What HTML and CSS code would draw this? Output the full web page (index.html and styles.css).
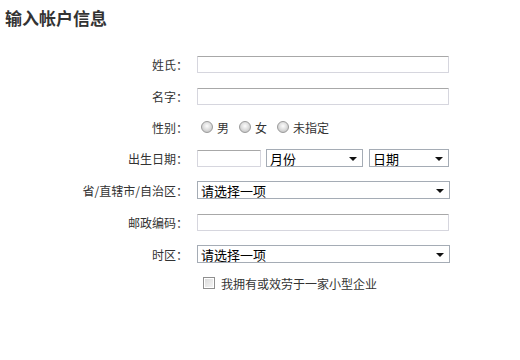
FILE: index.html
```html
<!DOCTYPE html>
<html lang="zh-CN">
<head>
    <meta charset="UTF-8">
    <title>输入帐户信息</title>
    <link rel="stylesheet" href="styles.css">
</head>
<body>
    <h1 class="title">输入帐户信息</h1>
    <form class="account-form">
        <div class="row">
            <label class="label">姓氏：</label>
            <input class="text-input" type="text">
        </div>
        <div class="row">
            <label class="label">名字：</label>
            <input class="text-input" type="text">
        </div>
        <div class="row row-radio">
            <label class="label">性别：</label>
            <div class="choices">
                <label class="choice"><input type="radio" name="sex"><span>男</span></label>
                <label class="choice"><input type="radio" name="sex"><span>女</span></label>
                <label class="choice"><input type="radio" name="sex"><span>未指定</span></label>
            </div>
        </div>
        <div class="row">
            <label class="label">出生日期：</label>
            <div class="date-fields">
                <input class="text-input year" type="text">
                <div class="select month"><span>月份</span><i class="arrow"></i></div>
                <div class="select day"><span>日期</span><i class="arrow"></i></div>
            </div>
        </div>
        <div class="row">
            <label class="label">省/直辖市/自治区：</label>
            <div class="select wide"><span>请选择一项</span><i class="arrow"></i></div>
        </div>
        <div class="row">
            <label class="label">邮政编码：</label>
            <input class="text-input" type="text">
        </div>
        <div class="row">
            <label class="label">时区：</label>
            <div class="select wide"><span>请选择一项</span><i class="arrow"></i></div>
        </div>
        <div class="row row-check">
            <span class="label"></span>
            <label class="check"><input type="checkbox"><span>我拥有或效劳于一家小型企业</span></label>
        </div>
    </form>
</body>
</html>
```

FILE: styles.css
```css
body {
    margin: 0;
    background: #fff;
    color: #333;
    font-family: "Noto Sans CJK SC", "Noto Sans", sans-serif;
    font-size: 12px;
}

.title {
    margin: 0;
    padding: 7px 0 0 5px;
    height: 48px;
    box-sizing: border-box;
    font-size: 17px;
    line-height: 22px;
    font-weight: bold;
    color: #333;
}

.account-form {
    display: flex;
    flex-direction: column;
}

.row {
    display: flex;
    align-items: center;
    height: 32px;
}

.row-radio {
    height: 30px;
}

.row-check {
    height: 26px;
}

.label {
    width: 197px;
    padding-right: 9px;
    box-sizing: border-box;
    text-align: right;
    flex-shrink: 0;
    color: #333;
}

.text-input {
    width: 252px;
    height: 17px;
    margin: 0;
    padding: 0 2px;
    box-sizing: border-box;
    border: 1px solid #d6d6de;
    border-top-color: #a8a8a8;
    border-radius: 1px;
    background: #fff;
    outline: none;
}

.text-input.year {
    width: 64px;
}

.date-fields {
    display: flex;
    gap: 5px;
    align-items: center;
}

.select {
    display: flex;
    align-items: center;
    justify-content: space-between;
    height: 18px;
    box-sizing: border-box;
    border: 1px solid #a5acb5;
    background: #fff;
    padding: 0 5px 0 3px;
    color: #000;
    font-size: 13px;
}

.select.month {
    width: 97px;
}

.select.day {
    width: 80px;
    margin-left: 1px;
}

.select.wide {
    width: 253px;
}

.arrow {
    width: 0;
    height: 0;
    border-left: 4px solid transparent;
    border-right: 4px solid transparent;
    border-top: 4px solid #111;
    margin-top: 1px;
}

.choices {
    display: flex;
    gap: 10px;
    align-items: center;
    padding-left: 4px;
}

.choice {
    display: flex;
    align-items: center;
    gap: 4px;
}

.choice input {
    appearance: none;
    margin: 0;
    width: 12px;
    height: 12px;
    border-radius: 50%;
    border: 1px solid #9a9a9a;
    background: radial-gradient(circle at 50% 40%, #fdfdfd 0, #e0e0e0 45%, #b8b8b8 100%);
}

.check {
    display: flex;
    align-items: center;
    gap: 6px;
    padding-left: 6px;
}

.check input {
    appearance: none;
    margin: 0;
    width: 12px;
    height: 12px;
    border: 1px solid #8f8f8f;
    background: linear-gradient(135deg, #d8d8d8, #f7f7f7);
    box-shadow: inset 0 0 0 1px #fff;
}
```
